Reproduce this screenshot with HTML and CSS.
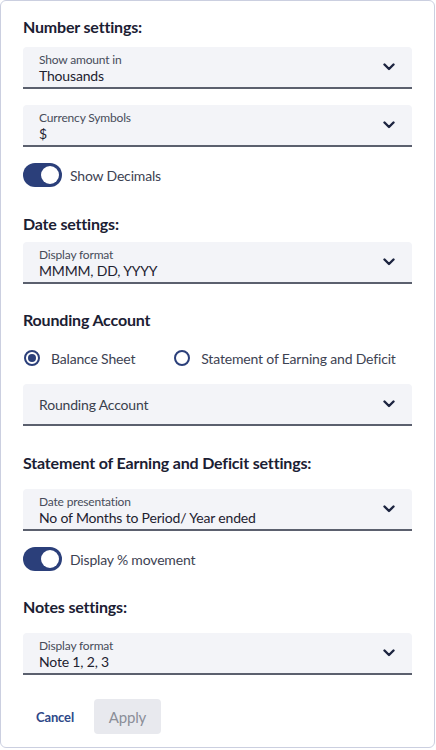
FILE: index.html
```html
<!DOCTYPE html>
<html lang="en">
<head>
  <meta charset="UTF-8">
  <title>Report settings</title>
  <link rel="stylesheet" href="styles.css">
</head>
<body>
  <div class="panel">

    <!-- Number settings -->
    <h3 class="panel__title">Number settings:</h3>
    <div class="select select--first">
      <span class="select__label">Show amount in</span>
      <span class="select__value">Thousands</span>
      <svg class="select__chevron" viewBox="0 0 12 8"><path d="M1.5 1.5 L6 6 L10.5 1.5"/></svg>
    </div>
    <div class="select">
      <span class="select__label">Currency Symbols</span>
      <span class="select__value">$</span>
      <svg class="select__chevron" viewBox="0 0 12 8"><path d="M1.5 1.5 L6 6 L10.5 1.5"/></svg>
    </div>
    <label class="toggle">
      <span class="toggle__track"><span class="toggle__knob"></span></span>
      <span class="toggle__text">Show Decimals</span>
    </label>

    <!-- Date settings -->
    <h3 class="panel__title title--date">Date settings:</h3>
    <div class="select select--tight">
      <span class="select__label">Display format</span>
      <span class="select__value">MMMM, DD, YYYY</span>
      <svg class="select__chevron" viewBox="0 0 12 8"><path d="M1.5 1.5 L6 6 L10.5 1.5"/></svg>
    </div>

    <!-- Rounding -->
    <h3 class="panel__title title--rounding">Rounding Account</h3>
    <div class="radios">
      <label class="radio radio--checked"><span class="radio__dot"></span>Balance Sheet</label>
      <label class="radio"><span class="radio__dot"></span>Statement of Earning and Deficit</label>
    </div>
    <div class="select select--single">
      <span class="select__value">Rounding Account</span>
      <svg class="select__chevron" viewBox="0 0 12 8"><path d="M1.5 1.5 L6 6 L10.5 1.5"/></svg>
    </div>

    <!-- Statement settings -->
    <h3 class="panel__title title--statement">Statement of Earning and Deficit settings:</h3>
    <div class="select select--loose">
      <span class="select__label">Date presentation</span>
      <span class="select__value">No of Months to Period/ Year ended</span>
      <svg class="select__chevron" viewBox="0 0 12 8"><path d="M1.5 1.5 L6 6 L10.5 1.5"/></svg>
    </div>
    <label class="toggle">
      <span class="toggle__track"><span class="toggle__knob"></span></span>
      <span class="toggle__text">Display % movement</span>
    </label>

    <!-- Notes -->
    <h3 class="panel__title title--notes">Notes settings:</h3>
    <div class="select select--loose">
      <span class="select__label">Display format</span>
      <span class="select__value">Note 1, 2, 3</span>
      <svg class="select__chevron" viewBox="0 0 12 8"><path d="M1.5 1.5 L6 6 L10.5 1.5"/></svg>
    </div>

    <div class="actions">
      <button class="btn btn--link">Cancel</button>
      <button class="btn btn--disabled">Apply</button>
    </div>
  </div>
</body>
</html>
```

FILE: styles.css
```css
/* ---------- reset ---------- */
* {
  box-sizing: border-box;
  margin: 0;
  padding: 0;
}
body {
  font-family: Lato, "Open Sans", sans-serif;
  letter-spacing: -0.011em;
  color: #1b2033;
  background: #ffffff;
}

/* ---------- panel ---------- */
.panel {
  width: 435px;
  height: 748px;
  border: 1px solid #cbcfe0;
  border-radius: 6px;
  padding: 14px 22px 0 22px;
}
.panel__title {
  font-size: 16px;
  font-weight: 700;
  line-height: 24px;
  color: #1b2033;
}
.title--date { margin-top: 25px; }
.title--rounding { margin-top: 24px; }
.title--statement { margin-top: 25px; }
.title--notes { margin-top: 24px; }

/* ---------- select ---------- */
.select {
  position: relative;
  height: 42px;
  background: #f3f4f8;
  border-radius: 4px 4px 0 0;
  border-bottom: 2px solid #5b606e;
  padding: 6px 40px 0 16px;
  display: flex;
  flex-direction: column;
  margin-top: 16px;
}
.select--first { margin-top: 8px; }
.select--tight { margin-top: 6px; }
.select--loose { margin-top: 14px; }
.select--single {
  margin-top: 14px;
  padding-top: 2px;
  justify-content: center;
}
.select__label {
  font-size: 12px;
  line-height: 14px;
  color: #474c5a;
}
.select__value {
  font-size: 14px;
  line-height: 18px;
  color: #1e2230;
}
.select--single .select__value { color: #3a3f4d; }
.select__chevron {
  position: absolute;
  right: 17px;
  top: 16px;
  width: 12px;
  height: 8px;
  fill: none;
  stroke: #1c2440;
  stroke-width: 2.4;
  stroke-linecap: round;
  stroke-linejoin: round;
}

/* ---------- toggle ---------- */
.toggle {
  display: flex;
  align-items: center;
  gap: 8px;
  margin-top: 16px;
  height: 24px;
}
.toggle__track {
  width: 39px;
  height: 24px;
  border-radius: 12px;
  background: #2b3f7a;
  display: flex;
  align-items: center;
  justify-content: flex-end;
  padding-right: 3px;
}
.toggle__knob {
  width: 18px;
  height: 18px;
  border-radius: 50%;
  background: #ffffff;
}
.toggle__text {
  font-size: 14px;
  color: #3d4252;
}

/* ---------- radios ---------- */
.radios {
  display: flex;
  align-items: center;
  gap: 39px;
  height: 24px;
  margin-top: 14px;
  padding-left: 1px;
}
.radio {
  display: flex;
  align-items: center;
  gap: 11px;
  font-size: 14px;
  color: #3d4252;
}
.radio__dot {
  width: 16px;
  height: 16px;
  border-radius: 50%;
  border: 2px solid #2b3f7a;
  display: flex;
  align-items: center;
  justify-content: center;
}
.radio--checked .radio__dot::after {
  content: "";
  width: 8px;
  height: 8px;
  border-radius: 50%;
  background: #2b3f7a;
}

/* ---------- actions ---------- */
.actions {
  display: flex;
  align-items: center;
  gap: 8px;
  margin-top: 24px;
  padding-left: 1px;
}
.btn {
  font-family: Lato, "Open Sans", sans-serif;
  letter-spacing: -0.011em;
  border: none;
  background: none;
  cursor: pointer;
}
.btn--link {
  font-size: 13px;
  font-weight: 700;
  color: #2e4888;
  padding: 0 12px;
}
.btn--disabled {
  width: 67px;
  height: 35px;
  border-radius: 4px;
  background: #e8e9ee;
  color: #8b8e98;
  font-size: 15px;
}
```
